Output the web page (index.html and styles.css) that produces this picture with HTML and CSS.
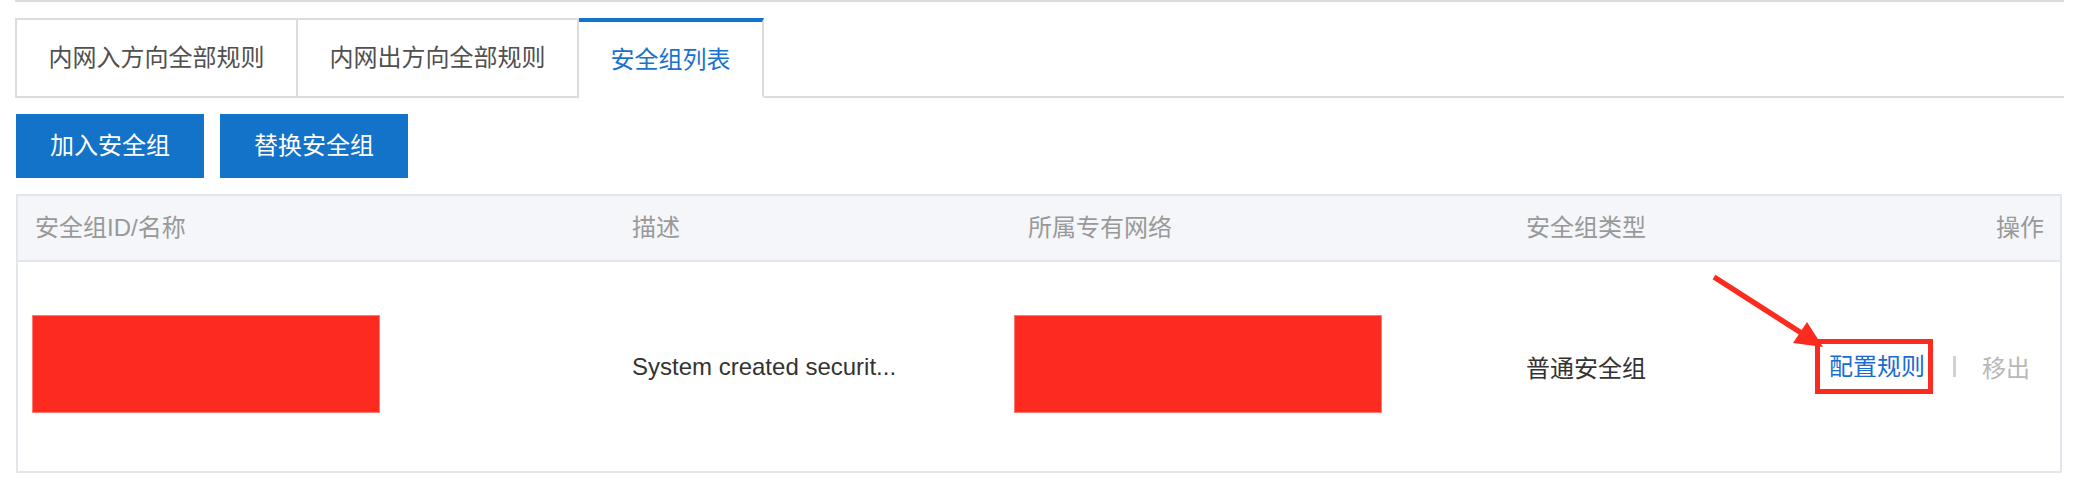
FILE: index.html
```html
<!DOCTYPE html>
<html lang="zh-CN">
<head>
<meta charset="utf-8">
<title>安全组列表</title>
<link rel="stylesheet" href="styles.css">
</head>
<body>
<div class="page">
  <div class="topline"></div>
  <div class="tabs">
    <div class="tab">内网入方向全部规则</div>
    <div class="tab">内网出方向全部规则</div>
    <div class="tab active">安全组列表</div>
    <div class="tab-fill"></div>
  </div>
  <div class="toolbar">
    <button class="btn">加入安全组</button>
    <button class="btn">替换安全组</button>
  </div>
  <div class="table">
    <div class="grid thead">
      <div class="th">安全组ID/名称</div>
      <div class="th">描述</div>
      <div class="th">所属专有网络</div>
      <div class="th">安全组类型</div>
      <div class="th th-right">操作</div>
    </div>
    <div class="grid tbody">
      <div class="td"><div class="redact redact-1"></div></div>
      <div class="td">System created securit...</div>
      <div class="td"><div class="redact redact-2"></div></div>
      <div class="td">普通安全组</div>
      <div class="td td-actions">
        <span class="highlight"><a class="link">配置规则</a></span>
        <span class="sep"></span>
        <span class="disabled">移出</span>
      </div>
    </div>
  </div>
  <svg class="arrow" width="2074" height="494" viewBox="0 0 2074 494">
    <line x1="1714" y1="277" x2="1803" y2="334" stroke="#fd2b1f" stroke-width="5.5"/>
    <polygon points="1807,322 1793,343 1823,347" fill="#fd2b1f"/>
  </svg>
</div>
</body>
</html>
```

FILE: styles.css
```css
* { box-sizing: border-box; }
html, body { margin: 0; padding: 0; background: #fff; }
body {
  font-family: "Liberation Sans", "Noto Sans CJK SC", sans-serif;
  font-size: 24px;
  color: #333;
}
.page {
  position: relative;
  width: 2074px;
  height: 494px;
  padding: 0 10px 0 15px;
}
.topline {
  height: 2px;
  background: #dcdcdc;
}
.tabs {
  display: flex;
  margin-top: 16px;
  height: 80px;
}
.tab {
  height: 80px;
  padding: 0 31.5px;
  border: 2px solid #dcdcdc;
  border-left: none;
  color: #505050;
  line-height: 76px;
  white-space: nowrap;
}
.tab:first-child { border-left: 2px solid #dcdcdc; }
.tab.active {
  border-top: 4px solid #1473cc;
  border-bottom-color: #fff;
  color: #1a72cf;
  line-height: 72px;
  padding-top: 2px;
}
.tab-fill {
  flex: 1;
  border-bottom: 2px solid #dcdcdc;
}
.toolbar {
  display: flex;
  gap: 16px;
  margin: 16px 0 0 1px;
}
.btn {
  height: 64px;
  padding: 0 34px;
  border: none;
  background: #1273c9;
  color: #fff;
  font-family: inherit;
  font-size: 24px;
  line-height: 64px;
}
.table {
  margin: 16px 2px 0 1px;
  border: 2px solid #e3e7ed;
}
.grid {
  display: grid;
  grid-template-columns: 597px 396px 498px 260px 1fr;
}
.thead {
  height: 66px;
  background: #f4f6fa;
  border-bottom: 2px solid #e3e7ed;
  color: #999;
}
.th, .td {
  display: flex;
  align-items: center;
  padding-left: 17px;
  white-space: nowrap;
}
.th { line-height: 30px; }
.th-right {
  justify-content: flex-end;
  padding-right: 16px;
}
.tbody { height: 209px; }
.redact {
  height: 98px;
  background: #fd2b1f;
  border: 1px solid #ff7a70;
  margin-bottom: 5px;
}
.redact-1 { width: 348px; margin-left: -3px; }
.redact-2 { width: 368px; margin-left: -14px; }
.td-actions {
  justify-content: flex-end;
  padding-right: 30px;
}
.highlight {
  display: inline-block;
  border: 5px solid #fd2b1f;
  padding: 9px 3px 9px 9px;
  line-height: 27px;
}
.link { color: #1a6ccf; }
.sep {
  display: inline-block;
  width: 3px;
  height: 21px;
  background: #d2d2d2;
  margin: 0 26px 0 20px;
}
.disabled { color: #b8b8b8; }
.arrow {
  position: absolute;
  left: 0;
  top: 0;
  pointer-events: none;
}
```
